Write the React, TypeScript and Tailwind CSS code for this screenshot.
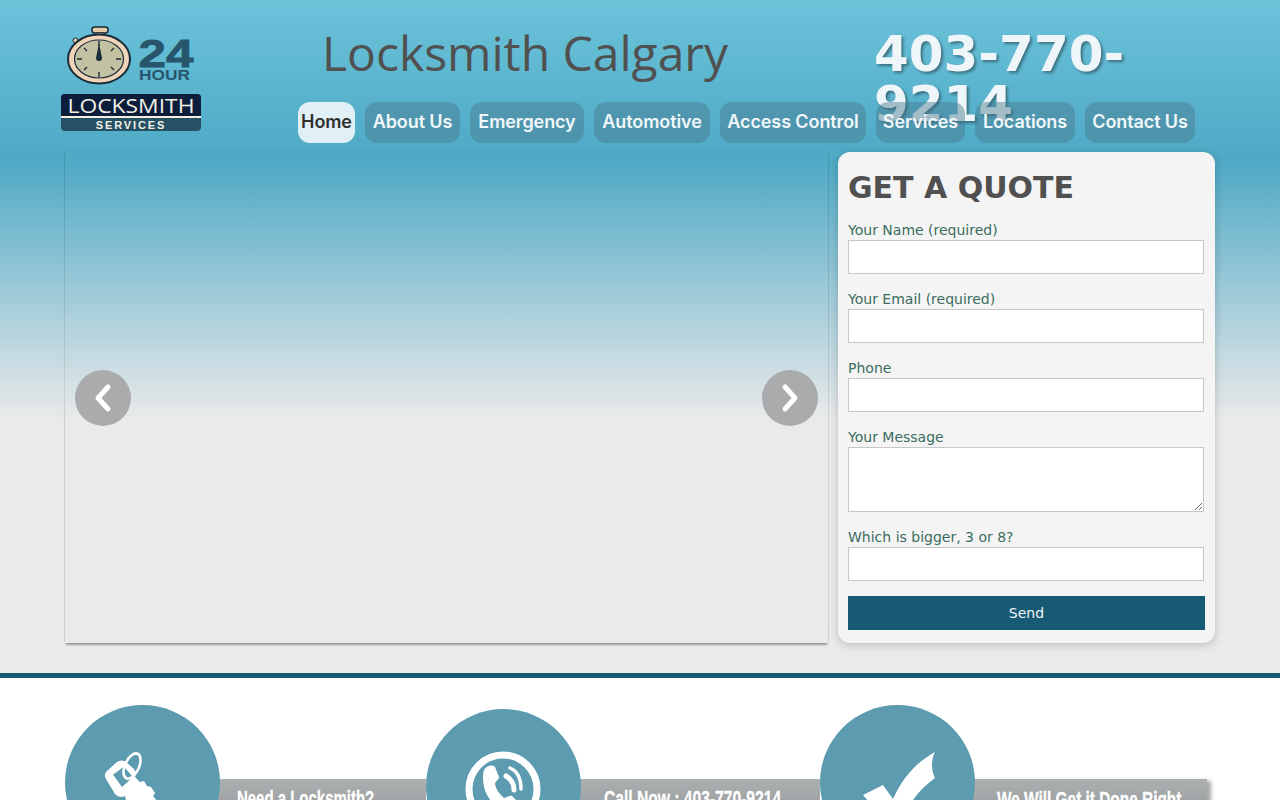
const navItems = [
  { label: "Home", w: "w-[57px]" },
  { label: "About Us", w: "w-[95px]" },
  { label: "Emergency", w: "w-[114px]" },
  { label: "Automotive", w: "w-[116px]" },
  { label: "Access Control", w: "w-[146px]" },
  { label: "Services", w: "w-[89px]" },
  { label: "Locations", w: "w-[100px]" },
  { label: "Contact Us", w: "w-[110px]" },
];

function Logo() {
  return (
    <svg width="142" height="110" viewBox="0 0 142 110" className="block">
      <rect x="32" y="2" width="16" height="6" rx="2.5" fill="#e8c9a8" stroke="#1a2c3a" strokeWidth="1.5" />
      <rect x="36" y="8" width="8" height="3" fill="#e8c9a8" stroke="#1a2c3a" strokeWidth="1" />
      <circle cx="15.5" cy="15.5" r="2.5" fill="#e8c9a8" stroke="#1a2c3a" />
      <ellipse cx="39" cy="34" rx="31" ry="24.5" fill="#f0d4b8" stroke="#1a2c3a" strokeWidth="2" />
      <ellipse cx="39" cy="34" rx="24.5" ry="19" fill="#c2c2a2" stroke="#1a2c3a" strokeWidth="1.2" />
      <g stroke="#1a2c3a" strokeWidth="1.4">
        <path d="M39 16v5M39 47v5M17 34h5M56 34h5M24 23l3 3M54 23l-3 3M24 45l3-3M54 45l-3-3" />
      </g>
      <path d="M39 18l3 15a3 3 0 1 1-6 0z" fill="#1a2c3a" />
      <text x="78.5" y="42" fontFamily="'Liberation Sans', sans-serif" fontWeight="700" fontSize="39" fill="#27566c" stroke="#27566c" strokeWidth="0.8" textLength="55" lengthAdjust="spacingAndGlyphs">24</text>
      <text x="79" y="54.5" fontFamily="'Liberation Sans', sans-serif" fontWeight="700" fontSize="14" fill="#27566c" textLength="51" lengthAdjust="spacingAndGlyphs">HOUR</text>
      <rect x="1" y="69" width="140" height="37" rx="4" fill="#265065" />
      <path d="M1 73a4 4 0 0 1 4-4h132a4 4 0 0 1 4 4v18H1z" fill="#0d1e3d" />
      <rect x="1" y="91" width="140" height="2" fill="#f3f0e2" />
      <text x="71" y="88" textAnchor="middle" fontFamily="'Open Sans', sans-serif" fontSize="20" fontWeight="500" fill="#f2f0e4" textLength="127" lengthAdjust="spacingAndGlyphs">LOCKSMITH</text>
      <text x="71" y="104" textAnchor="middle" fontFamily="'Liberation Sans', sans-serif" fontWeight="700" fontSize="11" fill="#f2f0e4" letterSpacing="1.9">SERVICES</text>
    </svg>
  );
}

function Field({ label, tall }: { label: string; tall?: boolean }) {
  return (
    <div className="mb-[15px]">
      <label className="block text-[14px] leading-[20px] text-[#3b6d60]">{label}</label>
      {tall ? (
        <textarea className="block h-[65px] w-[356px] border border-[#c7c7c7] bg-white" />
      ) : (
        <input className="block h-[34px] w-[356px] border border-[#c7c7c7] bg-white" />
      )}
    </div>
  );
}

function Chevron({ dir }: { dir: "l" | "r" }) {
  return (
    <svg width="20" height="30" viewBox="0 0 20 30" fill="none" stroke="#fff" strokeWidth="5" strokeLinecap="round" strokeLinejoin="round">
      <path d={dir === "l" ? "M15 4L5 15l10 11" : "M5 4l10 11L5 26"} />
    </svg>
  );
}

function KeyIcon() {
  return (
    <svg width="60" height="60" viewBox="0 0 60 60" fill="none" className="absolute left-[38px] top-[44px]">
      <path fillRule="evenodd" clipRule="evenodd" d="M3 30c-2-3-1-6 1-8L14 13c3-2 6-2 9 0l8 7c2 3 2 6 1 8l5 5 4-1 3 5 4 1 4 6-2 3 5 6v10H26L22 47l-3 1c-3 0-5-1-7-3zM11 27l8 11 11-10-8-9c-1-1-2-1-3 0l-8 6c-1 0-1 1 0 2z" fill="#fff" />
      <ellipse cx="29" cy="17" rx="7" ry="13.5" transform="rotate(25 29 17)" stroke="#fff" strokeWidth="2.6" />
    </svg>
  );
}

function PhoneIcon() {
  return (
    <svg width="80" height="80" viewBox="0 0 80 80" fill="none" className="absolute left-[37px] top-[40px]">
      <circle cx="40" cy="40" r="34" stroke="#fff" strokeWidth="7" />
      <path d="M21 21c2-4 8-6 11-3l4 10c0 3-4 4-4 7 1 5 4 10 9 14 3 0 5-3 8-2l7 7c1 3-4 7-9 8-9 1-18-7-23-16-4-7-5-19-3-25z" fill="#fff" />
      <path d="M43 27c5 3 8 7 8 14" stroke="#fff" strokeWidth="5" strokeLinecap="round" />
      <path d="M47 19c7 3 11 10 11 21" stroke="#fff" strokeWidth="3.5" strokeLinecap="round" />
    </svg>
  );
}

function CheckIcon() {
  return (
    <svg width="80" height="60" viewBox="0 0 80 60" className="absolute left-[40px] top-[46px]">
      <path d="M3 44L23 34l10 14C42 28 55 12 75 1c-4 8-4 18 0 26C60 38 50 50 42 70L25 70z" fill="#fff" />
    </svg>
  );
}

function Feature({ text, icon, className, barClass, textClass }: { text: string; icon: React.ReactNode; className: string; barClass: string; textClass: string }) {
  return (
    <div className={`relative flex ${className}`}>
      <div className={`absolute left-[100px] right-0 h-[60px] bg-gradient-to-b from-[#adb0b1] to-[#8a8e90] ${barClass}`} />
      <div className="relative z-10 h-[155px] w-[155px] shrink-0 overflow-hidden rounded-full bg-[#5c9bb0]">{icon}</div>
      <div className={`relative z-10 origin-left whitespace-nowrap font-['Liberation_Sans',sans-serif] text-[22px] font-bold leading-[28px] text-white [-webkit-text-stroke:0.3px_white] ${textClass}`}>{text}</div>
    </div>
  );
}

export default function App() {
  return (
    <div className="h-[800px] w-[1280px] overflow-hidden bg-white font-['DejaVu_Sans',sans-serif]">
      <div className="h-[673px] bg-[linear-gradient(to_bottom,#6cc3da_0px,#4ea9c5_160px,#eaeaea_420px,#eaeaea_673px)] px-[65px]">
        <header className="h-[152px]">
          <div className="flex h-[102px]">
            <div className="ml-[-5px] mt-[25px] w-[262px] shrink-0">
              <Logo />
            </div>
            <h1 className="w-[552px] shrink-0 pt-[23px] font-['Open_Sans',sans-serif] text-[48px] font-normal leading-[60px] text-[#505050]">Locksmith Calgary</h1>
            <div className="w-[260px] shrink-0 pt-[29px] text-[50px] font-bold leading-[50px] text-[#eff6fa] [text-shadow:2px_2px_3px_rgba(0,0,0,0.4)]">403-770-9214</div>
          </div>
          <nav className="relative flex gap-[10px] pl-[233px] font-['Inter',sans-serif]">
            {navItems.map((item, i) => (
              <a key={item.label} className={`flex h-[41px] items-center justify-center rounded-[12px] pb-[2px] text-[18px] font-semibold tracking-[-0.1px] ${item.w} ${i === 0 ? "bg-[#e1f0f6] text-[#2f2f2f]" : "bg-[rgba(70,120,140,0.45)] text-[#f1f7fa]"}`}>{item.label}</a>
            ))}
          </nav>
        </header>
        <div className="flex gap-[10px]">
          <div className="flex h-[491px] w-[763px] items-center justify-between px-[10px] shadow-[0_3px_2px_-1px_rgba(0,0,0,0.35),-1px_0_1px_rgba(0,0,0,0.08),1px_0_1px_rgba(0,0,0,0.08)]">
            <button className="flex h-[56px] w-[56px] items-center justify-center rounded-full bg-[#a9abac] pr-[1px]"><Chevron dir="l" /></button>
            <button className="flex h-[56px] w-[56px] items-center justify-center rounded-full bg-[#a9abac]"><Chevron dir="r" /></button>
          </div>
          <div className="h-[491px] w-[377px] rounded-[12px] bg-[#f4f4f4] pl-[10px] pt-[17px] shadow-[0_2px_8px_rgba(0,0,0,0.2)]">
            <h2 className="mb-[13px] text-[30px] font-bold leading-[38px] text-[#505050]">GET A QUOTE</h2>
            <Field label="Your Name (required)" />
            <Field label="Your Email (required)" />
            <Field label="Phone" />
            <Field label="Your Message" tall />
            <Field label="Which is bigger, 3 or 8?" />
            <button className="block h-[34px] w-[357px] bg-[#175a74] text-[14px] text-[#eef4f7]">Send</button>
          </div>
        </div>
      </div>
      <div className="h-[127px] border-t-[5px] border-[#175a74] bg-white pl-[65px] pt-[27px]">
        <div className="flex">
          <Feature className="w-[361px]" barClass="top-[74px]" textClass="ml-[17px] mt-[80px] scale-x-[0.68]" text="Need a Locksmith?" icon={<KeyIcon />} />
          <Feature className="mt-[4px] h-[155px] w-[394px]" barClass="top-[70px]" textClass="ml-[23px] mt-[76px] scale-x-[0.71]" text="Call Now : 403-770-9214" icon={<PhoneIcon />} />
          <Feature className="w-[387px]" barClass="top-[74px] shadow-[4px_2px_4px_rgba(0,0,0,0.35)]" textClass="ml-[22px] mt-[81px] scale-x-[0.7]" text="We Will Get it Done Right" icon={<CheckIcon />} />
        </div>
      </div>
    </div>
  );
}
